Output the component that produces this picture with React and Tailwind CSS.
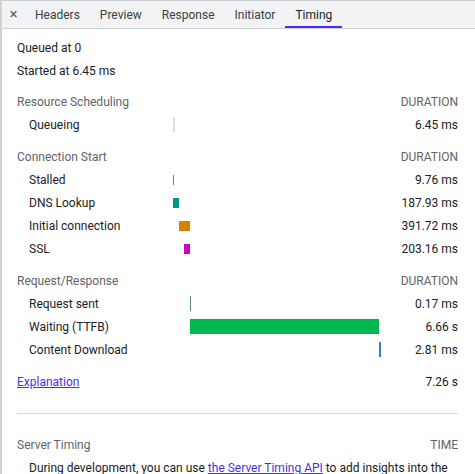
import React from 'react';

const tabs = ['Headers', 'Preview', 'Response', 'Initiator', 'Timing'];

// bar classes are written out so Tailwind picks them up
const sections = [
  {
    title: 'Resource Scheduling',
    gap: 'mt-[8px]',
    rows: [
      { label: 'Queueing', value: '6.45 ms', bar: 'ml-0 w-[2px] h-[15px] bg-[#dedede]' },
    ],
  },
  {
    title: 'Connection Start',
    gap: 'mt-[9px]',
    rows: [
      { label: 'Stalled', value: '9.76 ms', bar: 'ml-0 w-px h-[10px] bg-[#777777]' },
      { label: 'DNS Lookup', value: '187.93 ms', bar: 'ml-0 w-[6px] h-[10px] bg-[#009688]' },
      { label: 'Initial connection', value: '391.72 ms', bar: 'ml-[6px] w-[11px] h-[10px] bg-[#d68100]' },
      { label: 'SSL', value: '203.16 ms', bar: 'ml-[11px] w-[6px] h-[10px] bg-[#c800c8]' },
    ],
  },
  {
    title: 'Request/Response',
    gap: 'mt-[9px]',
    rows: [
      { label: 'Request sent', value: '0.17 ms', bar: 'ml-[17px] w-px h-[15px] bg-[#5f8b8e]' },
      { label: 'Waiting (TTFB)', value: '6.66 s', bar: 'ml-[17px] w-[189px] h-[15px] bg-[#00b94e]' },
      { label: 'Content Download', value: '2.81 ms', bar: 'ml-[206px] w-[2px] h-[15px] bg-[#3b78d8]' },
    ],
  },
];

function Row({ label, value, bar }) {
  return (
    <div className="grid grid-cols-[144px_1fr_auto] h-[23px] items-center pl-[12px]">
      <span className="text-[#202124]">{label}</span>
      <div className="flex items-center h-full">
        <div className={bar} />
      </div>
      <span className="text-[#202124]">{value}</span>
    </div>
  );
}

export default function App() {
  return (
    <div
      className="w-[475px] h-[474px] overflow-hidden bg-white border-l-2 border-[#cfd1d4] text-[12px] leading-none"
      style={{ fontFamily: 'Roboto, "Liberation Sans", sans-serif' }}
    >
      {/* tab strip */}
      <div className="flex h-[29px] bg-[#f1f3f4] border-t border-b border-[#cbcdd1]">
        <div className="w-[23px] flex items-center justify-center text-[#5f6368] text-[15px] pb-[1px]">×</div>
        {tabs.map((t) => (
          <div
            key={t}
            className={
              t === 'Timing'
                ? 'px-[10px] flex items-center text-[#202124] border-b-2 border-[#4b2cf0] pt-[2px]'
                : 'px-[10px] flex items-center text-[#3c4043] border-b-2 border-transparent pt-[2px]'
            }
          >
            {t}
          </div>
        ))}
      </div>

      <div className="pl-[15px] pr-[17px] pt-[7px]">
        <div className="h-[23px] flex items-center text-[#202124]">Queued at 0</div>
        <div className="h-[23px] flex items-center text-[#202124]">Started at 6.45 ms</div>

        {sections.map((s) => (
          <div key={s.title} className={s.gap}>
            <div className="h-[23px] flex items-center justify-between text-[#5f6368]">
              <span>{s.title}</span>
              <span>DURATION</span>
            </div>
            {s.rows.map((r) => (
              <Row key={r.label} {...r} />
            ))}
          </div>
        ))}

        <div className="mt-[9px] h-[23px] flex items-center justify-between">
          <a className="text-[#4b2cf0] underline">Explanation</a>
          <span className="text-[#202124]">7.26 s</span>
        </div>

        <div className="mt-[20px] border-t border-[#d6d8db]" />

        <div className="mt-[19px] h-[23px] flex items-center justify-between text-[#5f6368]">
          <span>Server Timing</span>
          <span>TIME</span>
        </div>
        <div className="h-[23px] flex items-center pl-[12px] whitespace-nowrap text-[#202124]">
          During development, you can use&nbsp;
          <a className="text-[#4b2cf0] underline">the Server Timing API</a>
          &nbsp;to add insights into the
        </div>
      </div>
    </div>
  );
}
